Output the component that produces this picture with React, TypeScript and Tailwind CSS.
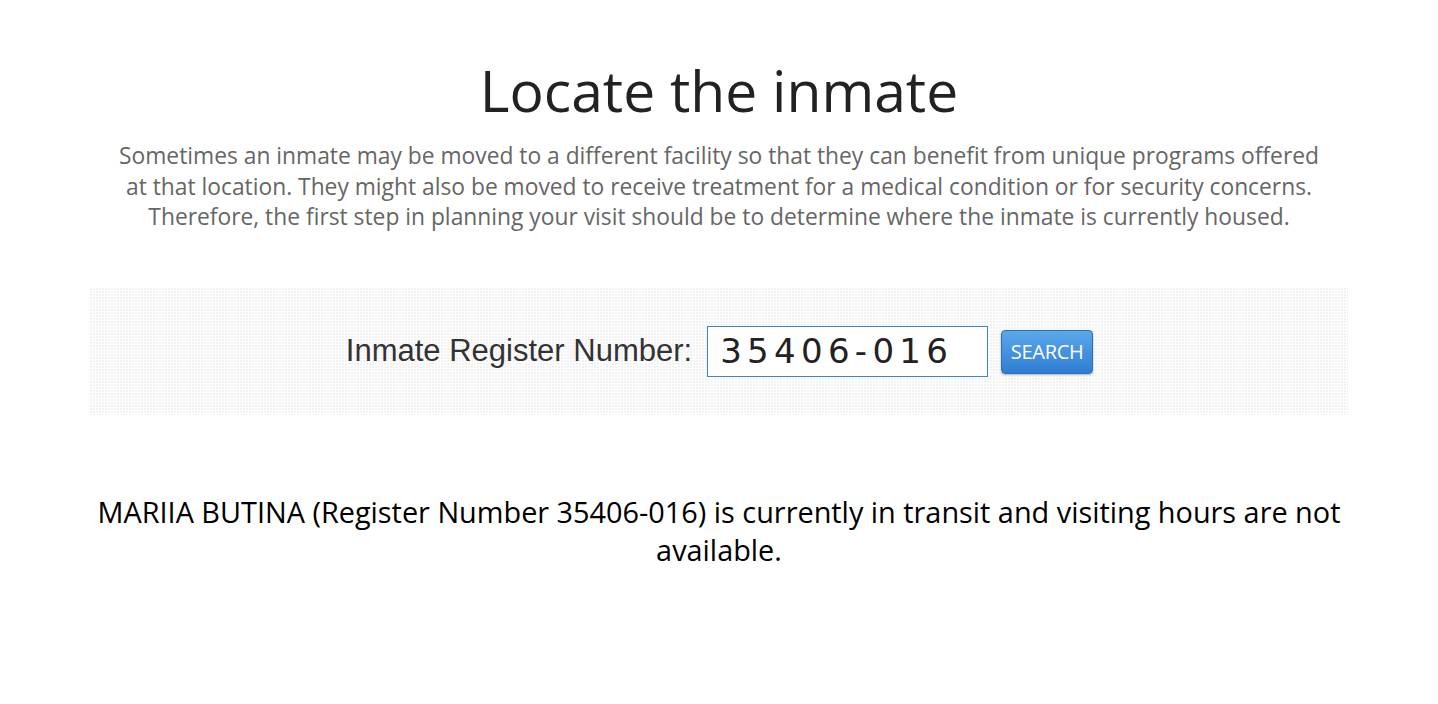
import React from "react";

export default function App() {
  return (
    <div className="min-h-[704px] w-full bg-white font-['Open_Sans',sans-serif]">
      <div className="mx-auto w-[1260px] pt-[54px] flex flex-col items-center">
        <h1 className="text-[57px] leading-[72px] text-[#222] font-normal text-center">Locate the inmate</h1>
        <p className="mt-[15px] w-[1212px] text-center text-[22.8px] leading-[30.5px] text-[#666]">
          Sometimes an inmate may be moved to a different facility so that they can benefit from unique programs offered at that location. They might also be moved to receive treatment for a medical condition or for security concerns. Therefore, the first step in planning your visit should be to determine where the inmate is currently housed.
        </p>
      </div>
      <div className="mt-[54px] ml-[89px] w-[1259px] h-[128px] flex items-center justify-center [background-image:linear-gradient(90deg,#ffffff_1px,transparent_1px),linear-gradient(#ffffff_1px,#f2f2f2_1px)] [background-size:3px_3px]">
        <div className="flex items-center pl-[2px] pt-[2px]">
          <label className="font-['Liberation_Sans',Arial,sans-serif] text-[31px] text-[#333] mr-[15px]">Inmate Register Number:</label>
          <div className="w-[281px] h-[51px] border border-[#3a86cc] bg-white flex items-center pl-[12px]">
            <span className="font-['DejaVu_Sans',sans-serif] text-[34px] tracking-[5.3px] text-[#222]">35406-016</span>
          </div>
          <button className="ml-[13px] w-[92px] h-[44px] rounded-[4px] border border-[#2f6fb8] bg-gradient-to-b from-[#5aa8ea] to-[#2f7dd4] text-white text-[20px] tracking-[-0.3px] shadow-[0_1px_2px_rgba(0,0,0,0.3)] font-['Open_Sans',sans-serif]">SEARCH</button>
        </div>
      </div>
      <p className="mt-[78px] mx-auto w-[1280px] text-center text-[28.85px] leading-[38px] text-black">
        MARIIA BUTINA (Register Number 35406-016) is currently in transit and visiting hours are not available.
      </p>
    </div>
  );
}
